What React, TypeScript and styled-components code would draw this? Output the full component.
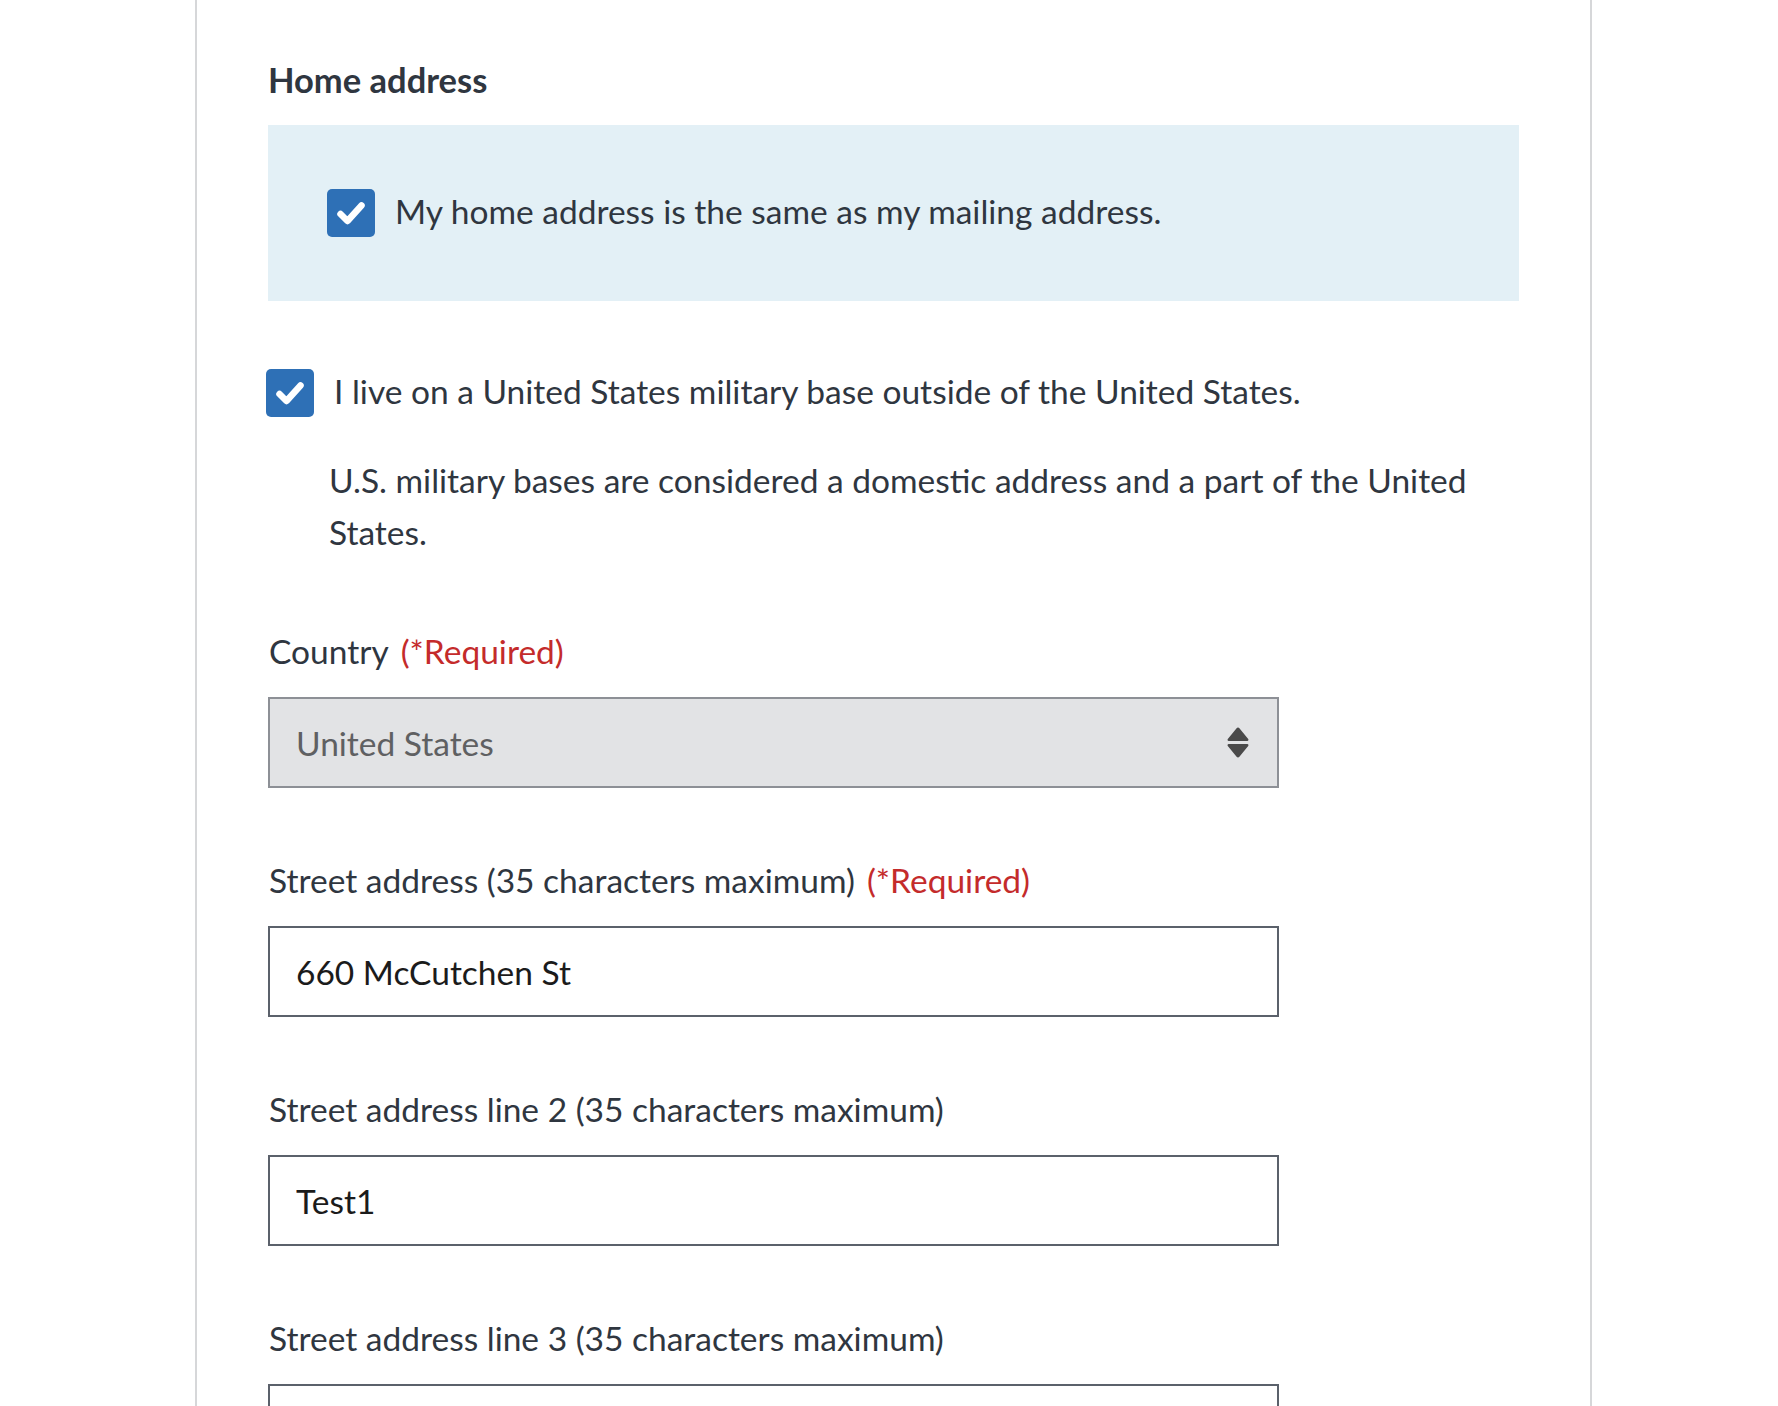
import { createGlobalStyle, styled } from 'styled-components';

const COLOR = {
  TEXT: '#2f3640',
  INK: '#1b1b1b',
  BLUE: '#2e70b6',
  BOX: '#e3f0f6',
  FRAME: '#d6d7d9',
  RED: '#c42b2b',
  DISABLED_BG: '#e2e3e5',
  DISABLED_BORDER: '#8d9096',
  DISABLED_TEXT: '#5f6062',
  INPUT_BORDER: '#5b616b'
};

const FONT = `Lato, "Liberation Sans", sans-serif`;

const GlobalStyle = createGlobalStyle`
  html, body {
    margin: 0;
    padding: 0;
    background: #ffffff;
  }
  body {
    font-family: ${FONT};
    color: ${COLOR.TEXT};
  }
  * {
    box-sizing: border-box;
  }
`;

const fields = [
  { id: 'street', label: 'Street address (35 characters maximum)', required: true, value: '660 McCutchen St' },
  { id: 'street2', label: 'Street address line 2 (35 characters maximum)', required: false, value: 'Test1' },
  { id: 'street3', label: 'Street address line 3 (35 characters maximum)', required: false, value: '' }
];

const CheckMark = () => (
  <svg width="48" height="48" viewBox="0 0 48 48" aria-hidden="true">
    <path
      d="M13.5 25 L20.5 32 L34.5 16.5"
      fill="none"
      stroke="#ffffff"
      strokeWidth="6.5"
      strokeLinecap="round"
      strokeLinejoin="round"
    />
  </svg>
);

const SortArrows = () => (
  <svg width="22" height="31" viewBox="0 0 22 31" aria-hidden="true">
    <path d="M11 0.5 C11.6 0.5 12 0.8 12.4 1.3 L21.2 12 C21.8 12.8 21.4 14 20.3 14 L1.7 14 C0.6 14 0.2 12.8 0.8 12 L9.6 1.3 C10 0.8 10.4 0.5 11 0.5 Z" fill="#4a4a4a" />
    <path d="M11 30.5 C11.6 30.5 12 30.2 12.4 29.7 L21.2 19 C21.8 18.2 21.4 17 20.3 17 L1.7 17 C0.6 17 0.2 18.2 0.8 19 L9.6 29.7 C10 30.2 10.4 30.5 11 30.5 Z" fill="#4a4a4a" />
  </svg>
);

const App = () => {
  return (
    <>
      <GlobalStyle />
      <Page>
        <Frame>
          <SectionTitle>Home address</SectionTitle>
          <SameAddressBox>
            <CheckRow>
              <CheckBox>
                <CheckMark />
              </CheckBox>
              <CheckText>My home address is the same as my mailing address.</CheckText>
            </CheckRow>
          </SameAddressBox>

          <MilitaryRow $offset={-2}>
            <CheckBox>
              <CheckMark />
            </CheckBox>
            <CheckText>I live on a United States military base outside of the United States.</CheckText>
          </MilitaryRow>
          <Hint>U.S. military bases are considered a domestic address and a part of the United States.</Hint>

          <Field>
            <Label>
              Country<Required>(*Required)</Required>
            </Label>
            <SelectWrap>
              <Select disabled value="USA" onChange={() => {}}>
                <option value="USA">United States</option>
              </Select>
              <ArrowSlot>
                <SortArrows />
              </ArrowSlot>
            </SelectWrap>
          </Field>

          {fields.map((field) => (
            <Field key={field.id}>
              <Label htmlFor={field.id}>
                {field.label}
                {field.required && <Required>(*Required)</Required>}
              </Label>
              <TextInput id={field.id} type="text" value={field.value} readOnly />
            </Field>
          ))}
        </Frame>
      </Page>
    </>
  );
};

const Page = styled.div`
  width: 1778px;
  height: 1406px;
  overflow: hidden;
  padding-left: 195px;
`;

const Frame = styled.div`
  width: 1397px;
  min-height: 1406px;
  border-left: 2px solid ${COLOR.FRAME};
  border-right: 2px solid ${COLOR.FRAME};
  padding: 60px 71px 0 71px;
`;

const SectionTitle = styled.h3`
  margin: 0 0 25px;
  font-size: 34.5px;
  line-height: 40px;
  font-weight: 700;
  color: ${COLOR.TEXT};
`;

const SameAddressBox = styled.div`
  display: flex;
  align-items: center;
  height: 176px;
  padding-left: 59px;
  background: ${COLOR.BOX};
`;

const CheckRow = styled.label`
  display: flex;
  align-items: center;
  gap: 20px;
`;

const MilitaryRow = styled(CheckRow)<{ $offset: number }>`
  margin: 64px 0 0 ${(p) => p.$offset}px;
  gap: 20px;
`;

const CheckBox = styled.span`
  flex: none;
  display: flex;
  width: 48px;
  height: 48px;
  border-radius: 5px;
  background: ${COLOR.BLUE};
`;

const CheckText = styled.span`
  font-size: 33.5px;
  line-height: 52px;
  margin-bottom: 4px;
`;

const Hint = styled.p`
  margin: 33px 0 0 61px;
  font-size: 33.5px;
  line-height: 52px;
`;

const Field = styled.div`
  display: flex;
  flex-direction: column;
  align-items: flex-start;
  margin-top: 67px;

  & + & {
    margin-top: 66px;
  }
`;

const Label = styled.label`
  font-size: 33.5px;
  line-height: 52px;
  margin: 0 0 20px 1px;
  color: ${COLOR.TEXT};
`;

const Required = styled.span`
  margin-left: 12px;
  color: ${COLOR.RED};
`;

const SelectWrap = styled.div`
  position: relative;
  width: 1011px;
`;

const Select = styled.select`
  appearance: none;
  display: block;
  width: 100%;
  height: 91px;
  margin: 0;
  padding: 0 70px 0 26px;
  border: 2px solid ${COLOR.DISABLED_BORDER};
  border-radius: 0;
  background: ${COLOR.DISABLED_BG};
  color: ${COLOR.DISABLED_TEXT};
  font-family: ${FONT};
  font-size: 33.5px;
  opacity: 1;
`;

const ArrowSlot = styled.span`
  position: absolute;
  top: 30px;
  right: 30px;
  display: flex;
  pointer-events: none;
`;

const TextInput = styled.input`
  display: block;
  width: 1011px;
  height: 91px;
  margin: 0;
  padding: 0 26px;
  border: 2px solid ${COLOR.INPUT_BORDER};
  border-radius: 0;
  background: #ffffff;
  color: ${COLOR.INK};
  font-family: ${FONT};
  font-size: 33.5px;
  outline: none;
`;

export default App;
